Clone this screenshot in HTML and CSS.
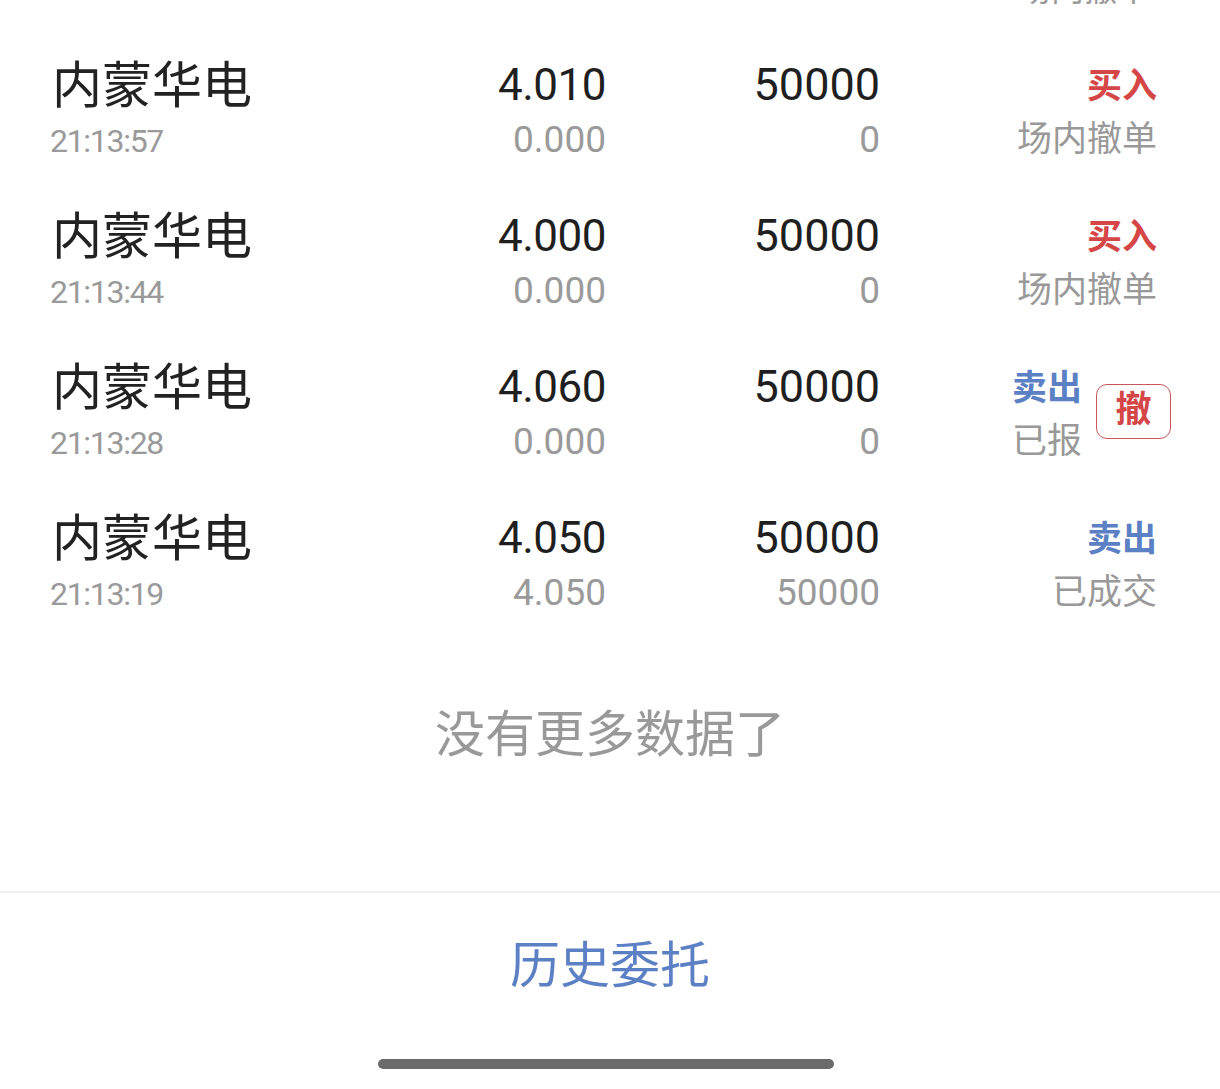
FILE: index.html
```html
<!DOCTYPE html>
<html lang="zh-CN">
<head>
<meta charset="utf-8">
<link rel="stylesheet" href="styles.css">
</head>
<body>
<div class="page">
  <div class="tail"><span>场内撤单</span></div>
  <div class="list">
    <div class="row">
      <div class="cell name"><div class="l1">内蒙华电</div><div class="l2 time">21:13:57</div></div>
      <div class="cell num"><div class="l1">4.010</div><div class="l2">0.000</div></div>
      <div class="cell num"><div class="l1">50000</div><div class="l2">0</div></div>
      <div class="cell status"><div class="l1 buy">买入</div><div class="l2 st">场内撤单</div></div>
    </div>
    <div class="row">
      <div class="cell name"><div class="l1">内蒙华电</div><div class="l2 time">21:13:44</div></div>
      <div class="cell num"><div class="l1">4.000</div><div class="l2">0.000</div></div>
      <div class="cell num"><div class="l1">50000</div><div class="l2">0</div></div>
      <div class="cell status"><div class="l1 buy">买入</div><div class="l2 st">场内撤单</div></div>
    </div>
    <div class="row">
      <div class="cell name"><div class="l1">内蒙华电</div><div class="l2 time">21:13:28</div></div>
      <div class="cell num"><div class="l1">4.060</div><div class="l2">0.000</div></div>
      <div class="cell num"><div class="l1">50000</div><div class="l2">0</div></div>
      <div class="cell status with-btn">
        <div class="stack"><div class="l1 sell">卖出</div><div class="l2 st">已报</div></div>
        <div class="cancel">撤</div>
      </div>
    </div>
    <div class="row">
      <div class="cell name"><div class="l1">内蒙华电</div><div class="l2 time">21:13:19</div></div>
      <div class="cell num"><div class="l1">4.050</div><div class="l2">4.050</div></div>
      <div class="cell num"><div class="l1">50000</div><div class="l2">50000</div></div>
      <div class="cell status"><div class="l1 sell">卖出</div><div class="l2 st">已成交</div></div>
    </div>
  </div>
  <div class="more">没有更多数据了</div>
  <div class="footer">
    <div class="history">历史委托</div>
    <div class="home-bar"></div>
  </div>
</div>
</body>
</html>
```
FILE: styles.css
```css
html, body {
  margin: 0;
  padding: 0;
  background: #ffffff;
}
.page {
  width: 1220px;
  height: 1089px;
  overflow: hidden;
  font-family: Roboto, "Noto Sans CJK SC", sans-serif;
  color: #1f1f1f;
}
.tail {
  height: 5px;
  overflow: hidden;
  display: flex;
  justify-content: flex-end;
  align-items: flex-end;
  padding-right: 70px;
}
.tail span {
  font-size: 33px;
  line-height: 33px;
  color: #999;
  margin-bottom: -1px;
  display: block;
}
.list {
  margin-top: 31px;
}
.row {
  display: grid;
  grid-template-columns: 340px 214px 274px 1fr;
  padding: 24px 63px 21px 52px;
  height: 106px;
}
.cell .l1, .cell .l2 {
  height: 53px;
  line-height: 53px;
  white-space: nowrap;
}
.name .l1 {
  font-size: 50px;
  color: #222;
}
.name .l2.time {
  font-size: 32px;
  color: #9a9a9a;
  letter-spacing: -1.3px;
  margin-left: -2px;
  line-height: 56px;
}
.num {
  text-align: right;
}
.num .l1 {
  font-size: 44px;
  color: #1f1f1f;
  letter-spacing: -0.5px;
  line-height: 50px;
}
.num .l1 + .l2 {
  font-size: 37px;
  color: #9a9a9a;
  line-height: 53px;
}
.cell.num:nth-child(3) .l1 {
  font-size: 45px;
  letter-spacing: 0;
}
.status {
  text-align: right;
}
.status .l1 {
  font-size: 35px;
  font-weight: 700;
}
.status .st {
  font-size: 35px;
  color: #999;
}
.buy {
  color: #d54646;
}
.sell {
  color: #5b80c4;
}
.with-btn {
  display: flex;
  justify-content: flex-end;
  align-items: center;
  margin-right: -14px;
  gap: 14px;
}
.stack {
  text-align: left;
}
.cancel {
  width: 73px;
  height: 53px;
  border: 1.5px solid #c9575a;
  border-radius: 11px;
  color: #d54646;
  font-size: 36px;
  font-weight: 700;
  line-height: 50px;
  text-align: center;
  margin-top: -7px;
}
.more {
  height: 186px;
  padding-top: 65px;
  line-height: 60px;
  font-size: 50px;
  color: #999;
  text-align: center;
  box-sizing: content-box;
}
.footer {
  border-top: 2px solid #f0f0f0;
  display: flex;
  flex-direction: column;
  align-items: center;
}
.history {
  margin-top: 43px;
  height: 60px;
  line-height: 60px;
  font-size: 50px;
  color: #5b80c4;
}
.home-bar {
  margin-top: 63px;
  margin-right: 8px;
  width: 456px;
  height: 10px;
  border-radius: 5px;
  background: #6b6b6b;
}
```
